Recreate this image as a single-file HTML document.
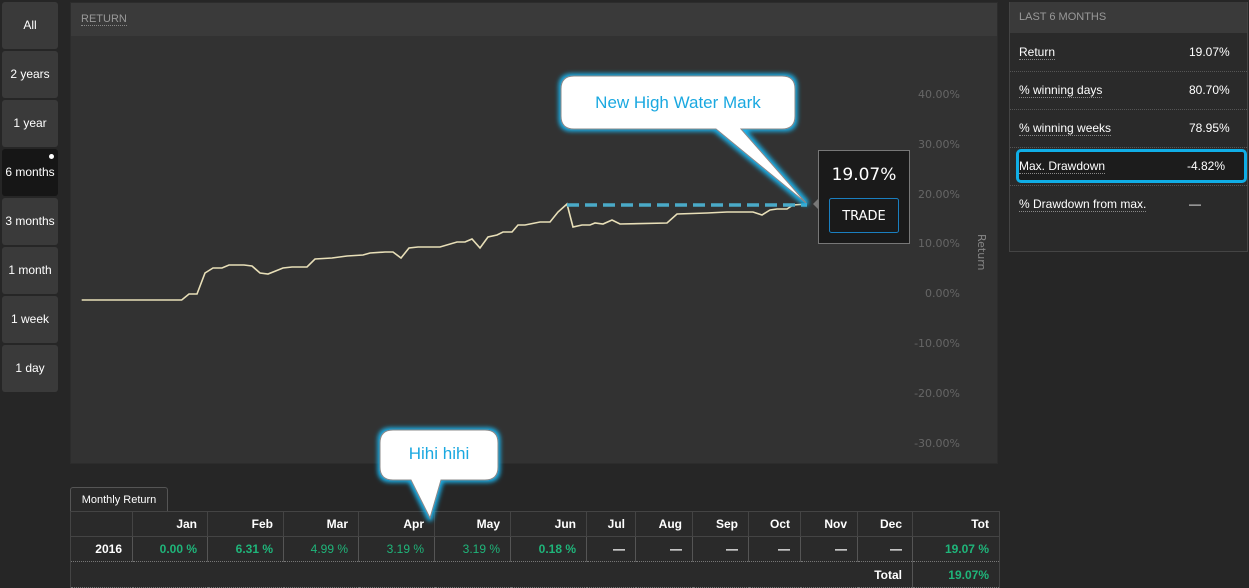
<!DOCTYPE html>
<html><head><style>
body{margin:0;width:1249px;height:587px;background:#262626;font-family:"Liberation Sans",sans-serif;position:relative;overflow:hidden}
.btn{position:absolute;left:2px;width:56px;height:47px;background:#3a3a3a;border-radius:3px;color:#fff;font-size:12px;text-align:center;line-height:47px}
.sel{background:#161616}
.abs{position:absolute}
table{border-collapse:collapse;table-layout:fixed}
td{padding:0 10px 0 0;text-align:right;white-space:nowrap;overflow:hidden}
</style></head><body>
<div class="btn" style="top:2px">All</div>
<div class="btn" style="top:51px">2 years</div>
<div class="btn" style="top:100px">1 year</div>
<div class="btn sel" style="top:149px">6 months<div class="abs" style="right:4px;top:5px;width:5px;height:5px;border-radius:50%;background:#fff"></div></div>
<div class="btn" style="top:198px">3 months</div>
<div class="btn" style="top:247px">1 month</div>
<div class="btn" style="top:296px">1 week</div>
<div class="btn" style="top:345px">1 day</div>

<div class="abs" style="left:70px;top:2px;width:928px;height:462px;background:#323232;border:1px solid #2c2c2c;box-sizing:border-box">
<div style="height:33px;background:#3a3a3a;color:#999;font-size:11px;line-height:32px;padding-left:10px"><span style="border-bottom:1px dotted #888">RETURN</span></div>
</div>

<div class="abs" style="left:1009px;top:2px;width:239px;height:250px;background:#2a2a2a;border:1px solid #444;border-top:none;box-sizing:border-box">
<div style="height:31px;background:#3a3a3a;color:#999;font-size:11px;line-height:31px;padding-left:9px">LAST 6 MONTHS</div>
<div style="font-size:12px;color:#fff">
<div style="height:38px;line-height:38px;border-bottom:1px dotted #555;position:relative"><span style="margin-left:9px;border-bottom:1px dotted #888">Return</span><span class="abs" style="left:179px">19.07%</span></div>
<div style="height:37px;line-height:37px;border-bottom:1px dotted #555;position:relative"><span style="margin-left:9px;border-bottom:1px dotted #888">% winning days</span><span class="abs" style="left:179px">80.70%</span></div>
<div style="height:37px;line-height:37px;border-bottom:1px dotted #555;position:relative"><span style="margin-left:9px;border-bottom:1px dotted #888">% winning weeks</span><span class="abs" style="left:179px">78.95%</span></div>
<div style="height:37px;line-height:37px;border-bottom:1px dotted #555;position:relative"><div class="abs" style="left:6px;top:1px;width:231px;height:34px;border:3px solid #10aee6;border-radius:5px;background:#1c1c1c;box-sizing:border-box"></div><span style="position:relative;margin-left:9px;border-bottom:1px dotted #888">Max. Drawdown</span><span class="abs" style="left:177px">-4.82%</span></div>
<div style="height:37px;line-height:37px;position:relative"><span style="margin-left:9px;border-bottom:1px dotted #888">% Drawdown from max.</span><span class="abs" style="left:179px">—</span></div>
</div></div>

<div class="abs" style="left:70px;top:487px;width:96px;height:24px;background:#2a2a2a;border:1px solid #555;border-bottom:none;border-radius:3px 3px 0 0;color:#fff;font-size:11px;line-height:24px;text-align:center">Monthly Return</div>
<table class="abs" style="left:70px;top:511px;width:929px;font-size:12px;font-weight:bold;color:#fff;background:#2a2a2a">
<colgroup><col style="width:62px"><col style="width:75px"><col style="width:76px"><col style="width:75px"><col style="width:76px"><col style="width:76px"><col style="width:76px"><col style="width:49px"><col style="width:57px"><col style="width:56px"><col style="width:52px"><col style="width:57px"><col style="width:55px"><col style="width:87px"></colgroup>
<tr style="height:25px;border-top:1px solid #555">
<td style="border:1px solid #444"></td>
<td style="border:1px solid #444">Jan</td>
<td style="border:1px solid #444">Feb</td>
<td style="border:1px solid #444">Mar</td>
<td style="border:1px solid #444">Apr</td>
<td style="border:1px solid #444">May</td>
<td style="border:1px solid #444">Jun</td>
<td style="border:1px solid #444">Jul</td>
<td style="border:1px solid #444">Aug</td>
<td style="border:1px solid #444">Sep</td>
<td style="border:1px solid #444">Oct</td>
<td style="border:1px solid #444">Nov</td>
<td style="border:1px solid #444">Dec</td>
<td style="border:1px solid #444">Tot</td></tr>
<tr style="height:25px;border-bottom:1px dotted #777">
<td style="border-left:1px solid #444">2016</td>
<td style="border-left:1px solid #555;color:#1fb57a">0.00 %</td>
<td style="border-left:1px solid #555;color:#1fb57a">6.31 %</td>
<td style="border-left:1px solid #555;color:#1fb57a;font-weight:normal">4.99 %</td>
<td style="border-left:1px solid #555;color:#1fb57a;font-weight:normal">3.19 %</td>
<td style="border-left:1px solid #555;color:#1fb57a;font-weight:normal">3.19 %</td>
<td style="border-left:1px solid #555;color:#1fb57a">0.18 %</td>
<td style="border-left:1px solid #555">—</td>
<td style="border-left:1px solid #555">—</td>
<td style="border-left:1px solid #555">—</td>
<td style="border-left:1px solid #555">—</td>
<td style="border-left:1px solid #555">—</td>
<td style="border-left:1px solid #555">—</td>
<td style="border-left:1px solid #555;border-right:1px solid #444;color:#1fb57a">19.07 %</td></tr>
<tr style="height:26px;border-bottom:1px dotted #777">
<td colspan="13" style="border-left:1px solid #444">Total</td>
<td style="border-left:1px solid #555;border-right:1px solid #444;color:#1fb57a">19.07%</td></tr>
</table>

<svg class="abs" style="left:0;top:0" width="1249" height="587">
<g font-family="DejaVu Sans, sans-serif" font-size="11" fill="#666" text-anchor="end">
<text x="960" y="98">40.00%</text><text x="960" y="148">30.00%</text><text x="960" y="198">20.00%</text><text x="960" y="247">10.00%</text><text x="960" y="297">0.00%</text><text x="960" y="347">-10.00%</text><text x="960" y="397">-20.00%</text><text x="960" y="447">-30.00%</text>
</g>
<text x="978" y="234" font-family="DejaVu Sans, sans-serif" font-size="11" fill="#888" transform="rotate(90 978 234)">Return</text>
<polyline fill="none" stroke="#e8dfb8" stroke-width="1.6" points="81.7,300 181.7,300 189,294 197,294 205,273 213,268 222,268 229,265 244,265 252,266 260,273 268,274 283,268 292,267 307,267 315,259 332,258 347,256 363,255 370,253 385,252 393,252 401,258 409,248 418,247 440,247 457,242 465,242 472,239 480,248 488,237 497,235 503,232 512,232 518,225 525,225 540,222 550,222 558,212 567,204 573,227 582,225 590,225 595,223 603,224 612,220 620,224 667,223 677,214 707,213 727,212 753,212 762,215 770,210 777,209 787,209 793,205 807,204"/>
<line x1="567" y1="205" x2="807" y2="205" stroke="#4aaac8" stroke-width="3.5" stroke-dasharray="12,6"/>
<polygon points="813,204 818,199 818,209" fill="#777"/>
<rect x="818.5" y="150.5" width="91" height="93" fill="#1a1a1a" stroke="#777"/>
<text x="864" y="180" text-anchor="middle" font-family="DejaVu Sans, sans-serif" font-size="17" fill="#fff">19.07%</text>
<rect x="829.5" y="198.5" width="69" height="34" rx="2" fill="#1a1a1a" stroke="#1a7fc0"/>
<text x="864" y="220" text-anchor="middle" font-family="DejaVu Sans, sans-serif" font-size="13" fill="#fff">TRADE</text>
<defs><filter id="g" x="-20%" y="-20%" width="140%" height="140%"><feMorphology operator="dilate" radius="2" in="SourceAlpha" result="d"/><feGaussianBlur in="d" stdDeviation="2" result="b"/><feFlood flood-color="#1ab0e8"/><feComposite in2="b" operator="in" result="c"/><feMerge><feMergeNode in="c"/><feMergeNode in="SourceGraphic"/></feMerge></filter></defs>
<path filter="url(#g)" d="M574,76 H782 Q795,76 795,89 V116 Q795,129 782,129 H741 L806,203 L716,129 H574 Q561,129 561,116 V89 Q561,76 574,76 Z" fill="#fff" stroke="#888"/>
<text x="678" y="108" text-anchor="middle" font-size="17" fill="#1aa8e0">New High Water Mark</text>
<path filter="url(#g)" d="M393,430 H485 Q498,430 498,443 V467 Q498,480 485,480 H441 L430,518 L411,480 H393 Q380,480 380,467 V443 Q380,430 393,430 Z" fill="#fff" stroke="#888"/>
<text x="439" y="459" text-anchor="middle" font-size="17" fill="#1aa8e0">Hihi hihi</text>
</svg>
</body></html>
